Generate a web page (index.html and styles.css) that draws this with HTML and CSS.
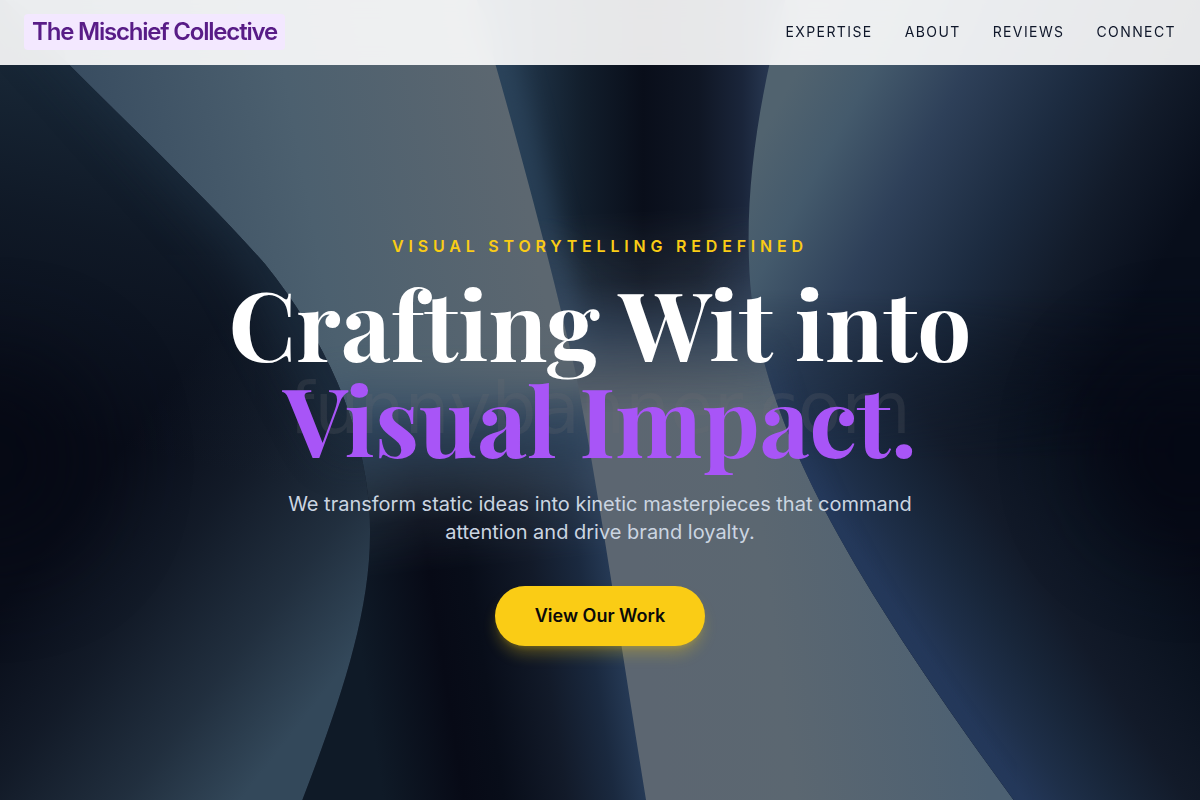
FILE: index.html
```html
<!DOCTYPE html>
<html lang="en">
<head>
<meta charset="utf-8">
<meta name="viewport" content="width=device-width, initial-scale=1">
<title>The Mischief Collective</title>
<link rel="stylesheet" href="styles.css">
</head>
<body>
<header class="site-header">
  <a class="logo" href="#home">The Mischief Collective</a>
  <nav class="nav" aria-label="Main">
    <a href="#expertise">Expertise</a>
    <a href="#about">About</a>
    <a href="#reviews">Reviews</a>
    <a href="#connect">Connect</a>
  </nav>
</header>
<main>
  <section class="hero" id="home">
    <svg class="backdrop" viewBox="0 0 1200 800" preserveAspectRatio="xMidYMid slice" aria-hidden="true">
      <defs>
        <clipPath id="clip-left"><path d="M-10 -10H-5C106 104 200 190 265 264C330 345 371 440 370 534C370 620 335 715 300 806H-10Z"/></clipPath>
        <clipPath id="clip-centre"><path d="M474 -10C515 130 550 260 575 370C597 480 620 640 647 806H1210V-10Z"/></clipPath>
        <clipPath id="clip-right"><path d="M788 -10C760 90 746 180 749 260C752 400 830 550 1018 806H1210V-10Z"/></clipPath>
        <filter id="b50" filterUnits="userSpaceOnUse" x="-300" y="-300" width="1800" height="1400" color-interpolation-filters="sRGB"><feGaussianBlur stdDeviation="50"/></filter>
        <filter id="b25" filterUnits="userSpaceOnUse" x="-300" y="-300" width="1800" height="1400" color-interpolation-filters="sRGB"><feGaussianBlur stdDeviation="25"/></filter>
        <filter id="b12" filterUnits="userSpaceOnUse" x="-300" y="-300" width="1800" height="1400" color-interpolation-filters="sRGB"><feGaussianBlur stdDeviation="12"/></filter>

        <linearGradient id="band" gradientUnits="userSpaceOnUse" x1="80" y1="140" x2="500" y2="60">
          <stop offset="0" stop-color="#384c60"/><stop offset=".5" stop-color="#4c606f"/><stop offset="1" stop-color="#5c6770"/>
        </linearGradient>
        <linearGradient id="band-low" gradientUnits="userSpaceOnUse" x1="365" y1="680" x2="628" y2="640">
          <stop offset="0" stop-color="#0f1a27"/><stop offset=".3" stop-color="#070a16"/><stop offset=".45" stop-color="#080d19"/><stop offset=".68" stop-color="#121a29"/><stop offset=".86" stop-color="#1a293f"/><stop offset="1" stop-color="#283d5a"/>
        </linearGradient>
        <linearGradient id="beam" gradientUnits="userSpaceOnUse" x1="640" y1="600" x2="960" y2="560">
          <stop offset="0" stop-color="#5c6671"/><stop offset=".4" stop-color="#5b6771"/><stop offset="1" stop-color="#4c6072"/>
        </linearGradient>
        <linearGradient id="centre-top" gradientUnits="userSpaceOnUse" x1="494" y1="120" x2="770" y2="120">
          <stop offset="0" stop-color="#283f54"/><stop offset=".14" stop-color="#1e3144"/><stop offset=".32" stop-color="#121e2c"/><stop offset=".54" stop-color="#090e1a"/><stop offset=".74" stop-color="#0f1624"/><stop offset=".9" stop-color="#1a253a"/><stop offset="1" stop-color="#283852"/>
        </linearGradient>
        <linearGradient id="right-top" gradientUnits="userSpaceOnUse" x1="770" y1="120" x2="1130" y2="320">
          <stop offset="0" stop-color="#51636f"/><stop offset=".16" stop-color="#445a6c"/><stop offset=".36" stop-color="#2e4059"/><stop offset=".6" stop-color="#1c2b40"/><stop offset=".8" stop-color="#121b2a"/><stop offset="1" stop-color="#080e1b"/>
        </linearGradient>
        <linearGradient id="right-low" gradientUnits="userSpaceOnUse" x1="890" y1="600" x2="1125" y2="442">
          <stop offset="0" stop-color="#24385a"/><stop offset=".13" stop-color="#1e2f49"/><stop offset=".28" stop-color="#18263a"/><stop offset=".48" stop-color="#121a29"/><stop offset=".75" stop-color="#0b1320"/><stop offset="1" stop-color="#070b17"/>
        </linearGradient>
        <linearGradient id="left-top" gradientUnits="userSpaceOnUse" x1="90" y1="440" x2="180" y2="40">
          <stop offset="0" stop-color="#1b2c3c" stop-opacity="0"/><stop offset=".5" stop-color="#1b2c3c" stop-opacity=".4"/><stop offset="1" stop-color="#1b2c3c"/>
        </linearGradient>
        <linearGradient id="left-low" gradientUnits="userSpaceOnUse" x1="120" y1="450" x2="365" y2="640">
          <stop offset="0" stop-color="#33485a" stop-opacity="0"/><stop offset=".35" stop-color="#33485a" stop-opacity=".24"/><stop offset=".7" stop-color="#33485a" stop-opacity=".58"/><stop offset="1" stop-color="#33485a"/>
        </linearGradient>

        <linearGradient id="fade-band" gradientUnits="userSpaceOnUse" x1="430" y1="400" x2="446" y2="570">
          <stop offset="0" stop-color="#fff" stop-opacity="0"/><stop offset=".3" stop-color="#fff" stop-opacity=".3"/><stop offset=".7" stop-color="#fff" stop-opacity=".84"/><stop offset="1" stop-color="#fff"/>
        </linearGradient>
        <linearGradient id="fade-centre" gradientUnits="userSpaceOnUse" x1="650" y1="210" x2="660" y2="410">
          <stop offset="0" stop-color="#fff"/><stop offset=".35" stop-color="#fff" stop-opacity=".78"/><stop offset=".7" stop-color="#fff" stop-opacity=".26"/><stop offset="1" stop-color="#fff" stop-opacity="0"/>
        </linearGradient>
        <linearGradient id="fade-right" gradientUnits="userSpaceOnUse" x1="900" y1="290" x2="900" y2="460">
          <stop offset="0" stop-color="#fff" stop-opacity="0"/><stop offset="1" stop-color="#fff"/>
        </linearGradient>
        <mask id="mask-band" maskUnits="userSpaceOnUse" x="-10" y="-10" width="1220" height="820"><rect x="-10" y="-10" width="1220" height="820" fill="url(#fade-band)"/></mask>
        <mask id="mask-centre" maskUnits="userSpaceOnUse" x="-10" y="-10" width="1220" height="820"><rect x="-10" y="-10" width="1220" height="820" fill="url(#fade-centre)"/></mask>
        <mask id="mask-right" maskUnits="userSpaceOnUse" x="-10" y="-10" width="1220" height="820"><rect x="-10" y="-10" width="1220" height="820" fill="url(#fade-right)"/></mask>
      </defs>

      <rect width="1200" height="800" fill="url(#band)"/>
      <path d="M320 440H620" fill="none" stroke="#2a4460" stroke-width="80" opacity=".8" filter="url(#b25)"/>
      <rect width="800" height="800" fill="url(#band-low)" mask="url(#mask-band)"/>

      <g clip-path="url(#clip-left)">
        <rect width="400" height="800" fill="#080c18"/>
        <rect width="400" height="800" fill="url(#left-low)"/>
        <rect width="400" height="800" fill="url(#left-top)"/>
        <path d="M0 -60L265 240L370 440" fill="none" stroke="#1e3042" stroke-width="60" opacity=".75" filter="url(#b25)"/>
        <ellipse cx="-10" cy="460" rx="100" ry="100" fill="#050813" opacity=".8" filter="url(#b50)"/>
      </g>

      <g clip-path="url(#clip-centre)">
        <rect x="450" width="760" height="800" fill="url(#beam)"/>
        <path d="M540 320H780" fill="none" stroke="#304762" stroke-width="70" opacity=".6" filter="url(#b25)"/>
        <g mask="url(#mask-centre)">
          <rect x="450" width="400" height="800" fill="url(#centre-top)"/>
          <path d="M478 -10C515 120 545 240 575 370" fill="none" stroke="#2e4760" stroke-width="34" opacity=".65" filter="url(#b12)"/>
          <path d="M520 270L580 340H760V270" fill="none" stroke="#2d4262" stroke-width="30" opacity=".6" filter="url(#b25)"/>
        </g>
      </g>

      <g clip-path="url(#clip-right)">
        <rect x="740" width="470" height="800" fill="url(#right-top)"/>
        <rect x="740" width="470" height="800" fill="url(#right-low)" mask="url(#mask-right)"/>
        <path d="M760 350C800 500 880 640 1010 810" fill="none" stroke="#2a4060" stroke-width="16" opacity=".4" filter="url(#b12)"/>
        <ellipse cx="1190" cy="450" rx="90" ry="90" fill="#040713" opacity=".8" filter="url(#b50)"/>
      </g>

      <text class="watermark" x="600" y="433" text-anchor="middle">funnybanner.com</text>
    </svg>
    <div class="hero-content">
      <p class="eyebrow">Visual Storytelling Redefined</p>
      <h1 class="title">Crafting Wit into <span class="accent">Visual Impact.</span></h1>
      <p class="lead">We transform static ideas into kinetic masterpieces that command attention and drive brand loyalty.</p>
      <a class="cta" href="#work">View Our Work</a>
    </div>
  </section>
</main>
</body>
</html>
```
FILE: styles.css
```css
* { box-sizing: border-box; }

body {
  margin: 0;
  background: #080d1a;
  font-family: Inter, "Liberation Sans", sans-serif;
}

a { text-decoration: none; }

.site-header {
  position: fixed;
  inset: 0 0 auto;
  z-index: 2;
  display: flex;
  align-items: center;
  justify-content: space-between;
  padding: 14px 24px 15px;
  background: rgba(255, 255, 255, 0.9);
  backdrop-filter: blur(12px);
}

.logo {
  padding: 4px 8px;
  border-radius: 4px;
  background: #f3e8ff;
  color: #581c87;
  font-size: 24px;
  font-weight: 600;
  line-height: 28px;
  letter-spacing: -0.05em;
}

.nav {
  display: flex;
  gap: 32px;
}

.nav a {
  color: #0f172a;
  font-size: 14px;
  line-height: 20px;
  letter-spacing: 0.1em;
  text-transform: uppercase;
}

.hero {
  position: relative;
  display: flex;
  align-items: center;
  justify-content: center;
  min-height: 100vh;
  padding: 80px 24px 0;
  overflow: hidden;
}

.backdrop {
  position: absolute;
  inset: 0;
  width: 100%;
  height: 100%;
}

.watermark {
  fill: #6c7075;
  fill-opacity: 0.2;
  font-family: "DejaVu Sans", sans-serif;
  font-size: 71px;
}

.hero-content {
  position: relative;
  display: flex;
  flex-direction: column;
  align-items: center;
  max-width: 896px;
  text-align: center;
}

.eyebrow {
  margin: 0 0 16px;
  color: #facc15;
  font-size: 16px;
  font-weight: 600;
  line-height: 24px;
  letter-spacing: 0.3em;
  text-transform: uppercase;
}

.title {
  margin: 0 0 24px;
  color: #fff;
  font-family: "Playfair Display", "Liberation Serif", serif;
  font-size: 96px;
  font-weight: 700;
  line-height: 96px;
}

.accent {
  display: block;
  color: #a855f7;
}

.lead {
  max-width: 672px;
  margin: 0 0 40px;
  color: #cbd5e1;
  font-size: 20px;
  line-height: 28px;
}

.cta {
  padding: 16px 40px;
  border-radius: 30px;
  background: #facc15;
  box-shadow: 0 10px 15px -3px rgba(250, 204, 21, 0.3), 0 4px 6px -4px rgba(250, 204, 21, 0.3);
  color: #0a0a0a;
  font-size: 18px;
  font-weight: 600;
  line-height: 28px;
}
```
